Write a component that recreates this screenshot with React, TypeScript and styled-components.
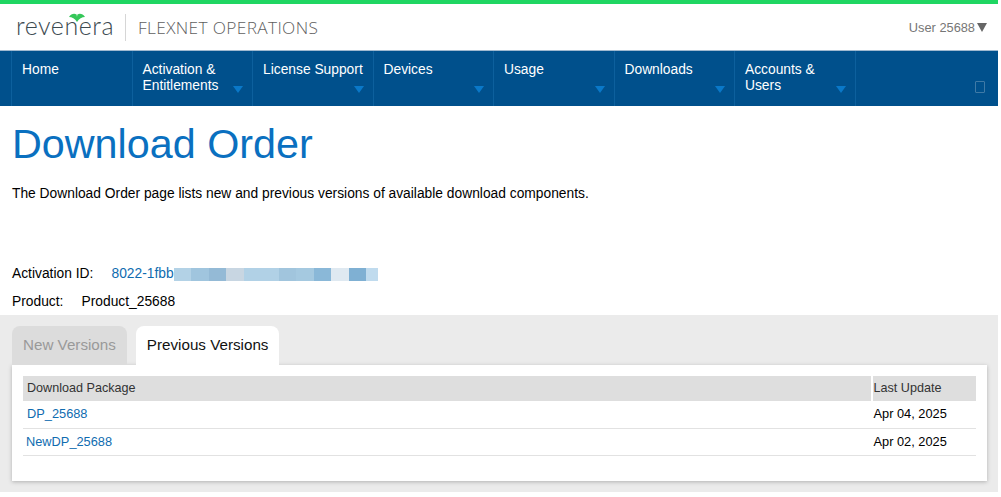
import React from 'react';
import styled, { createGlobalStyle } from 'styled-components';

const GlobalStyle = createGlobalStyle`
    html, body {
        margin: 0;
        padding: 0;
        background: #fff;
        font-family: "Liberation Sans", Arial, sans-serif;
        font-size: 13.8px;
        color: #000;
        overflow: hidden;
    }
`;

const Page = styled.div`
    width: 998px;
`;

const Header = styled.header`
    display: flex;
    justify-content: space-between;
    align-items: center;
    height: 46px;
    border-top: 4px solid #1fd662;
    padding: 0 11px 0 17px;
`;

const Brand = styled.div`
    display: flex;
    align-items: center;
    height: 30px;
`;

const LogoMark = styled.div`
    position: relative;
    width: 100px;
    height: 30px;
`;

const LogoWord = styled.span`
    position: absolute;
    left: -1px;
    top: 0;
    font-family: Lato, sans-serif;
    font-weight: 300;
    font-size: 25px;
    line-height: 26px;
    color: #3c4a50;
    letter-spacing: 0.55px;
`;

const LogoLeaf = styled.svg`
    position: absolute;
    left: 52px;
    top: 1px;
`;

const BrandDivider = styled.div`
    width: 1px;
    height: 27px;
    margin: 0 12px 0 8px;
    background: #d6d6d6;
`;

const ProductName = styled.span`
    font-family: "Open Sans", sans-serif;
    font-weight: 300;
    font-size: 17.3px;
    letter-spacing: 0.35px;
    color: #5f5f5f;
`;

const UserMenu = styled.div`
    display: flex;
    align-items: center;
    gap: 2px;
    font-size: 12.8px;
    color: #767676;
`;

const UserCaret = styled.span`
    width: 0;
    height: 0;
    border-left: 5px solid transparent;
    border-right: 5px solid transparent;
    border-top: 9px solid #666;
`;

const Nav = styled.nav`
    display: flex;
    height: 56px;
    padding-left: 11px;
    background: #00508c;
    border-top: 1px solid #9fb9d0;
    box-sizing: border-box;
`;

const NavItem = styled.div`
    position: relative;
    box-sizing: border-box;
    width: 120.5px;
    padding: 11px 8px 0 10px;
    border-left: 1px solid #0d609d;
    color: #fff;
    font-size: 13.8px;
    line-height: 16px;
`;

const NavFill = styled(NavItem)`
    flex: 1;
`;

const NavCaret = styled.span`
    position: absolute;
    right: 9px;
    bottom: 13px;
    width: 0;
    height: 0;
    border-left: 5px solid transparent;
    border-right: 5px solid transparent;
    border-top: 7px solid #0a78c8;
`;

const NavToggle = styled.span`
    position: absolute;
    right: 13px;
    bottom: 13px;
    width: 8px;
    height: 10px;
    border: 1px solid #3f7aa6;
    border-radius: 1px;
`;

const Title = styled.h1`
    margin: 12px 0 0;
    padding-left: 12px;
    font-weight: 400;
    font-size: 41.3px;
    line-height: 52px;
    color: #0a70c0;
`;

const Intro = styled.p`
    margin: 14px 0 0;
    padding-left: 12px;
    line-height: 20px;
`;

const InfoRow = styled.div<{ $top: number }>`
    display: flex;
    align-items: center;
    margin-top: ${({ $top }) => $top}px;
    padding-left: 12px;
    line-height: 16px;
`;

const InfoLabel = styled.span<{ $w: number }>`
    width: ${({ $w }) => $w}px;
`;

const LinkText = styled.a`
    color: #0f6cb0;
    text-decoration: none;
`;

const Masked = styled.span`
    display: flex;
    height: 13px;
`;

const MaskCell = styled.span<{ $c: string; $w?: number }>`
    width: ${({ $w }) => $w || 17.5}px;
    background: ${({ $c }) => $c};
`;

const Lower = styled.section`
    margin-top: 5px;
    height: 177px;
    padding: 11px 11px 0 12px;
    background: #ebebeb;
    box-sizing: border-box;
`;

const Tabs = styled.div`
    display: flex;
    gap: 9px;
    height: 39px;
`;

const Tab = styled.div<{ $active?: boolean }>`
    padding: 0 11px;
    line-height: 38px;
    font-size: 15.2px;
    border-radius: 8px 8px 0 0;
    background: ${({ $active }) => ($active ? '#fff' : '#dcdcdc')};
    color: ${({ $active }) => ($active ? '#111' : '#999')};
`;

const Card = styled.div`
    height: 116px;
    padding: 11px 11.5px 0 11px;
    background: #fff;
    box-shadow: 0 1px 4px rgba(0, 0, 0, 0.25);
    box-sizing: border-box;
`;

const Grid = styled.div`
    display: grid;
    grid-template-columns: 1fr 105px;
    font-size: 12.8px;
`;

const HeadCell = styled.div`
    height: 25px;
    line-height: 24px;
    padding-left: 4px;
    background: #dedede;
    color: #333;
    font-size: 12.6px;
    & + & {
        border-left: 2px solid #fff;
        padding-left: 1px;
    }
`;

const BodyCell = styled.div`
    height: 27.5px;
    line-height: 25px;
    padding-left: 4px;
    border-bottom: 1px solid #e2e2e2;
    box-sizing: border-box;
    & + & {
        padding-left: 3px;
    }
`;

const maskColors = ['#b3d2e6', '#a0c5de', '#94bad6', '#c8d6e2', '#b1d1e6', '#b1d1e6', '#a1c5dd', '#a5c9e0', '#8ab8d8', '#dfe9f1', '#7fb0d3', '#c0dbee'];

const navItems = [
    { label: 'Home', caret: false },
    { label: 'Activation & Entitlements', caret: true },
    { label: 'License Support', caret: true },
    { label: 'Devices', caret: true },
    { label: 'Usage', caret: true },
    { label: 'Downloads', caret: true },
    { label: 'Accounts & Users', caret: true },
];

const rows = [
    { name: 'DP_25688', date: 'Apr 04, 2025' },
    { name: 'NewDP_25688', date: 'Apr 02, 2025' },
];

const App: React.FC = () => (
    <Page>
        <GlobalStyle />
        <Header>
            <Brand>
                <LogoMark>
                    <LogoWord>revenera</LogoWord>
                    <LogoLeaf width="16" height="9" viewBox="0 0 16 9">
                        <path d="M0 4 C2 1 5 0 7.6 1.5 L8 4 L8.4 1.5 C11 0 14 1 16 4 C13 4 10 5.5 8 9 C6 5.5 3 4 0 4 Z" fill="#35c759" />
                    </LogoLeaf>
                </LogoMark>
                <BrandDivider />
                <ProductName>FLEXNET OPERATIONS</ProductName>
            </Brand>
            <UserMenu>
                User 25688
                <UserCaret />
            </UserMenu>
        </Header>
        <Nav>
            {navItems.map((item) => (
                <NavItem key={item.label}>
                    {item.label}
                    {item.caret && <NavCaret />}
                </NavItem>
            ))}
            <NavFill>
                <NavToggle />
            </NavFill>
        </Nav>
        <Title>Download Order</Title>
        <Intro>The Download Order page lists new and previous versions of available download components.</Intro>
        <InfoRow $top={62}>
            <InfoLabel $w={99.5}>Activation ID:</InfoLabel>
            <LinkText href="#">8022-1fbb</LinkText>
            <Masked>
                {maskColors.map((c, i) => (
                    <MaskCell key={i} $c={c} $w={i === 11 ? 12 : undefined} />
                ))}
            </Masked>
        </InfoRow>
        <InfoRow $top={12}>
            <InfoLabel $w={69.5}>Product:</InfoLabel>
            Product_25688
        </InfoRow>
        <Lower>
            <Tabs>
                <Tab>New Versions</Tab>
                <Tab $active>Previous Versions</Tab>
            </Tabs>
            <Card>
                <Grid>
                    <HeadCell>Download Package</HeadCell>
                    <HeadCell>Last Update</HeadCell>
                    {rows.map((r) => (
                        <React.Fragment key={r.name}>
                            <BodyCell>
                                <LinkText href="#">{r.name}</LinkText>
                            </BodyCell>
                            <BodyCell>{r.date}</BodyCell>
                        </React.Fragment>
                    ))}
                </Grid>
            </Card>
        </Lower>
    </Page>
);

export default App;
